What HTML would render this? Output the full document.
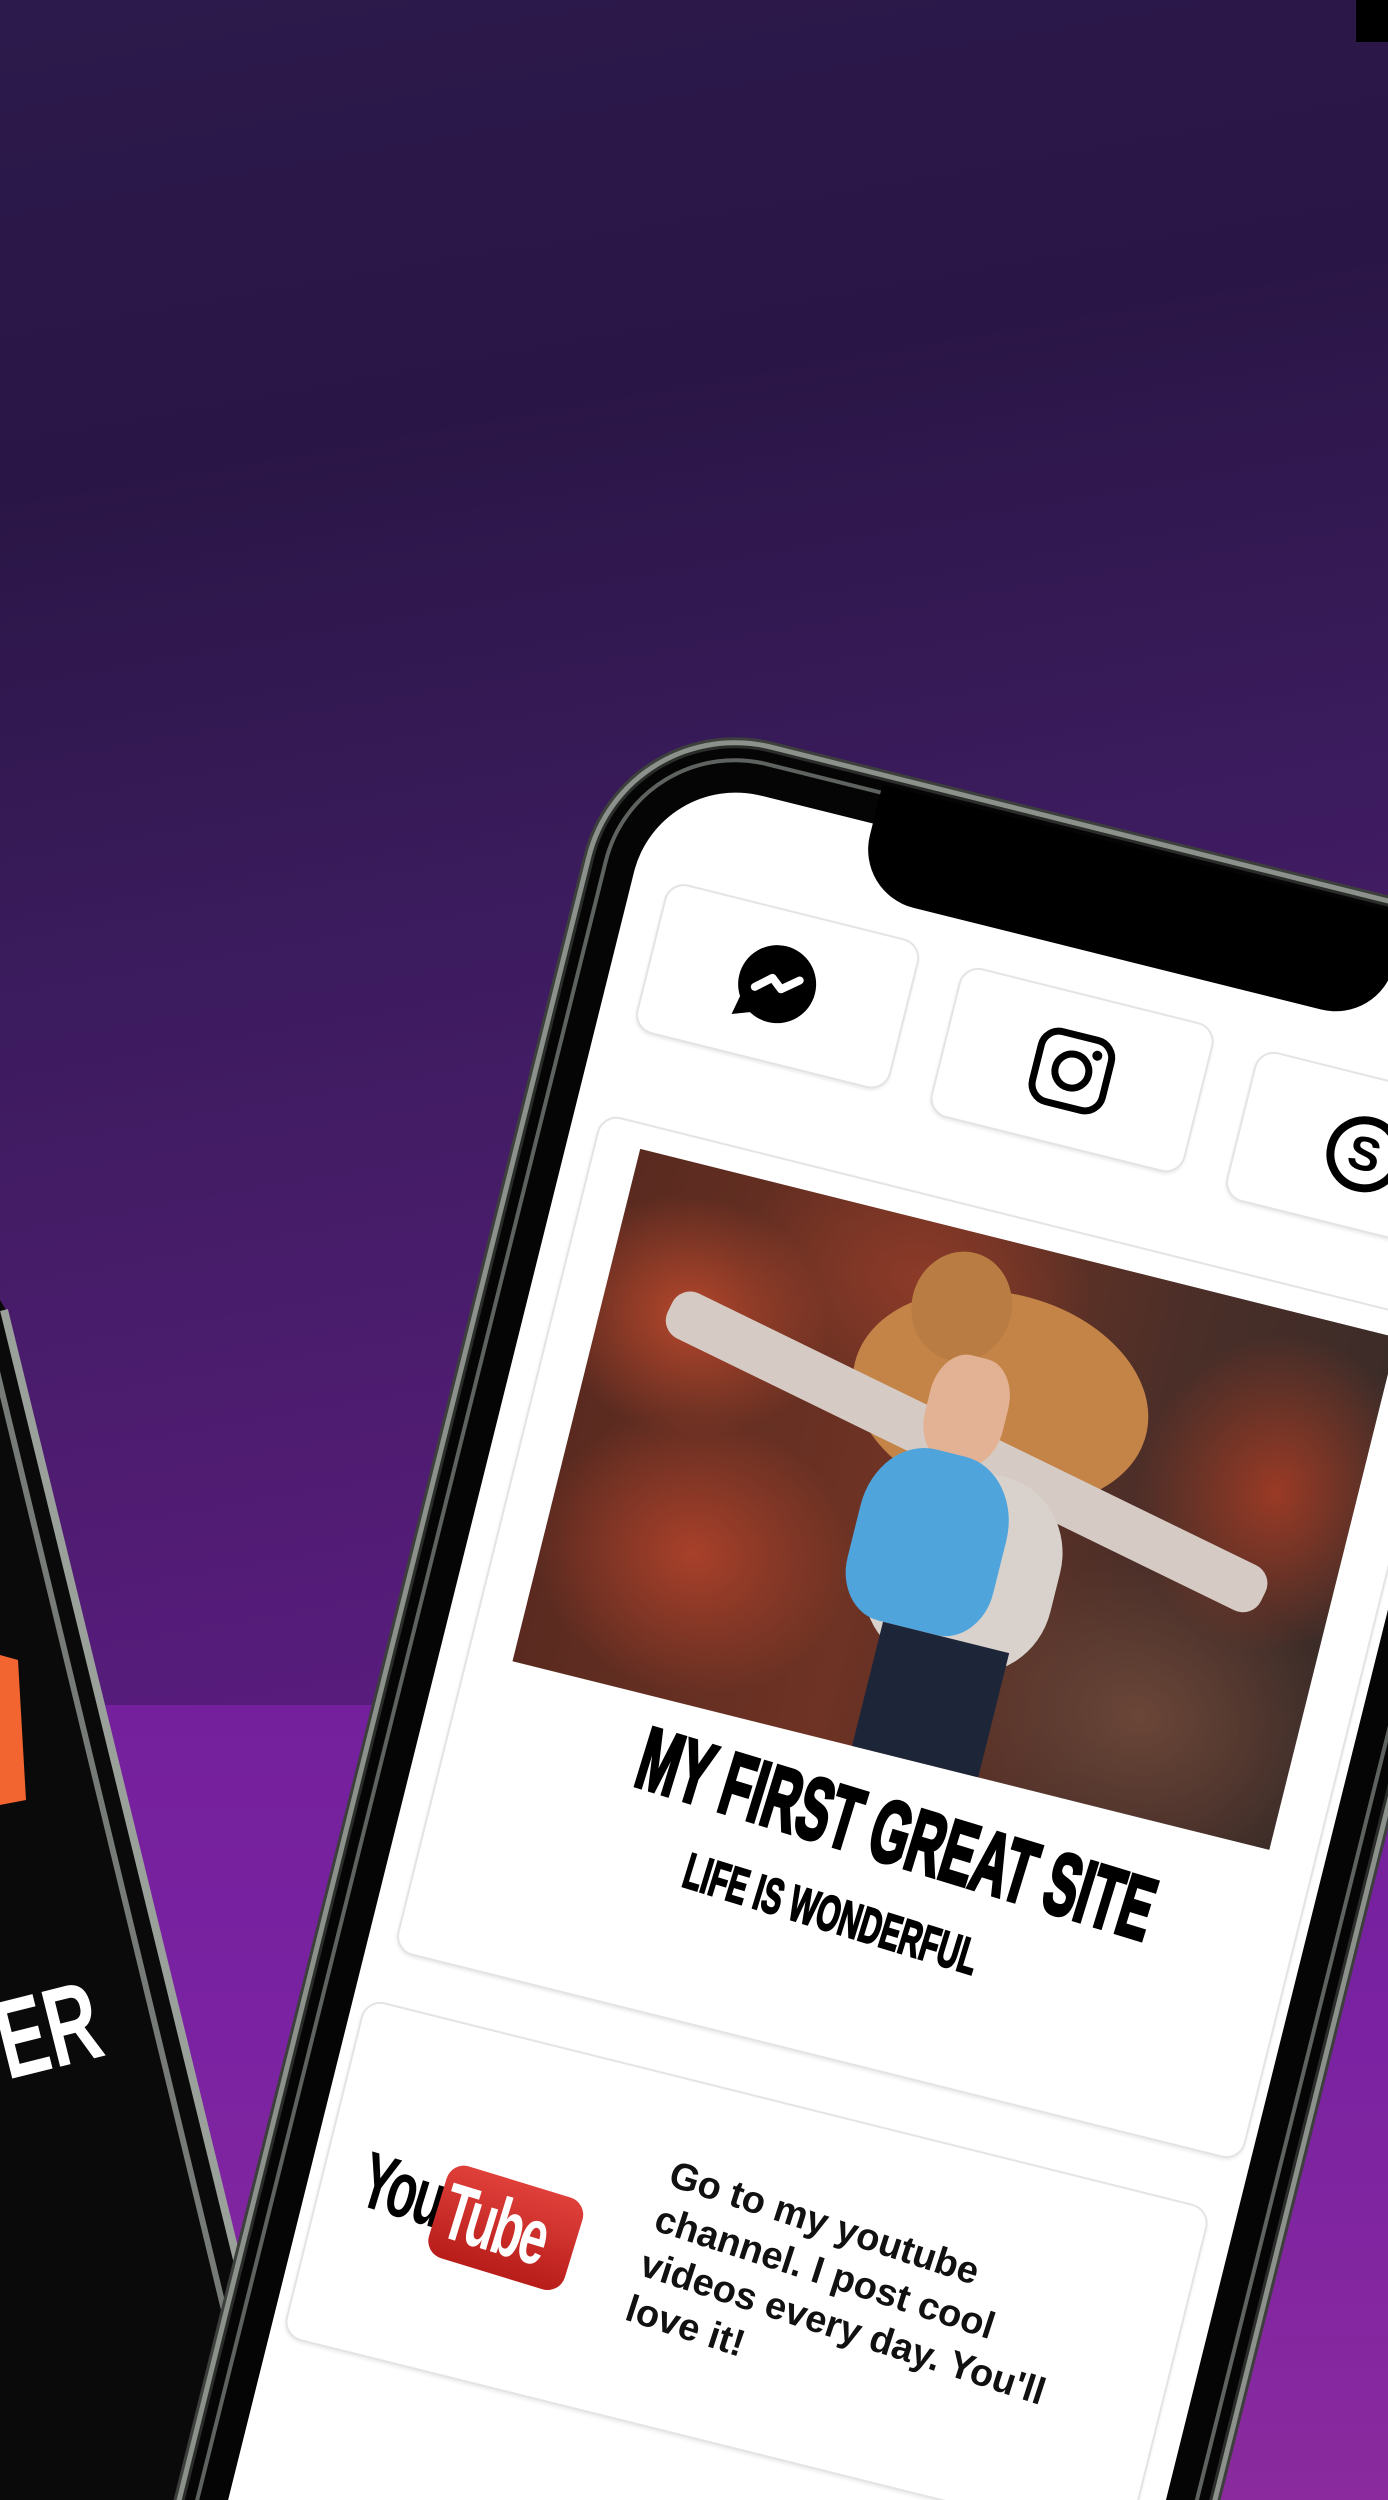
<!DOCTYPE html>
<html><head><meta charset="utf-8"><style>
html,body{margin:0;padding:0;width:1388px;height:2500px;overflow:hidden}
#root{position:relative;width:1388px;height:2500px;overflow:hidden;font-family:"Liberation Sans",sans-serif;
background:linear-gradient(170deg,#2c1a4c 0%,#2a1646 18%,#3a1b5c 35%,#4a1c6c 50%,#561c7a 62%,#5e1c84 72%,#6e1f94 85%,#7b22a0 100%);}
.floor{position:absolute;left:0;top:1705px;width:1388px;height:800px;background:linear-gradient(180deg,#74209c,#7a22a2 40%,#8a2a9e);}
.phone{position:absolute;left:606px;top:757px;transform-origin:0 0;transform:rotate(14deg);}
.frame{position:absolute;left:13px;top:-44px;width:994px;height:2090px;border-radius:145px;background:#050505;
 box-shadow:0 0 0 3px #2a2d2a,0 0 0 8px #8c918c,0 0 0 11px #3c3f3c;}
.frame:after{content:"";position:absolute;left:10px;top:10px;right:10px;bottom:10px;border-radius:135px;border:4px solid #5f635f;}
.screen{position:absolute;left:55px;top:0;width:910px;height:1990px;background:#fff;border-radius:105px;overflow:hidden;}
.content{position:absolute;left:-55px;top:0;width:1000px;height:1990px}
.notch{position:absolute;left:275px;top:-40px;width:540px;height:112px;background:#000;border-radius:0 0 60px 60px;}
.card{position:absolute;background:#fff;border:2px solid #e4e4e4;border-radius:20px;box-shadow:0 2px 3px rgba(0,0,0,.08);}
.title{position:absolute;white-space:nowrap;font-weight:bold;color:#000;transform-origin:50% 50%;-webkit-text-stroke:4px #000}
.photo{position:absolute;left:128px;top:372px;width:780px;height:528px;overflow:hidden;
background:radial-gradient(ellipse 140px 120px at 90px 150px,#b5472c,transparent),
radial-gradient(ellipse 160px 140px at 150px 380px,#a8402a,transparent),
radial-gradient(ellipse 140px 160px at 700px 180px,#9a3a25,transparent),
radial-gradient(ellipse 200px 160px at 620px 430px,#6a4638,transparent),
radial-gradient(ellipse 180px 130px at 300px 60px,#8c3a28,transparent),
linear-gradient(90deg,#5a2a20,#6e3324 40%,#4a2e28 75%,#3c2c28);}
.yt{position:absolute;left:407px;top:1336px;width:520px;font-size:38px;line-height:47px;font-weight:bold;color:#111;transform:rotate(4deg);transform-origin:0 0}
</style></head><body>
<div id="root">
<div class="floor"></div>
<div style="position:absolute;left:1356px;top:0;width:32px;height:42px;background:#000"></div>

<svg width="1388" height="2500" style="position:absolute;left:0;top:0">
 <polygon points="0,1300 6,1310 300,2500 0,2500" fill="#0a0a0a"/>
 <polyline points="4,1310 296,2500" stroke="#9aa09a" stroke-width="8" fill="none"/>
 <polyline points="-14,1326 270,2500" stroke="#777b77" stroke-width="6" fill="none"/>
 <polygon points="0,1655 18,1660 26,1800 0,1805" fill="#f26530"/>
 <text x="-10" y="2075" fill="#fff" font-family="Liberation Sans" font-weight="bold" font-size="112" transform="rotate(-14 20 2020) scale(0.66 1)">ER</text>
</svg>

<div class="phone">
 <div class="frame"></div>
 <div class="screen"><div class="content">
  <div class="card" style="left:91px;top:104px;width:258px;height:150px"></div>
  <div class="card" style="left:397px;top:114px;width:258px;height:150px"></div>
  <div class="card" style="left:704px;top:124px;width:258px;height:150px"></div>
  <svg style="position:absolute;left:178px;top:137px" width="86" height="86" viewBox="0 0 86 86">
   <circle cx="43" cy="42" r="39" fill="#000"/><path d="M10 62 L6 82 L28 74 Z" fill="#000"/>
   <polyline points="22,50 37,37 48,46 64,33" fill="none" stroke="#fff" stroke-width="8" stroke-linejoin="round" stroke-linecap="round"/>
  </svg>
  <svg style="position:absolute;left:486px;top:150px" width="84" height="84" viewBox="0 0 84 84">
   <rect x="6" y="6" width="72" height="72" rx="18" fill="none" stroke="#000" stroke-width="7"/>
   <circle cx="42" cy="42" r="17" fill="none" stroke="#000" stroke-width="7"/><circle cx="63" cy="21" r="5" fill="#000"/>
  </svg>
  <svg style="position:absolute;left:790px;top:160px" width="84" height="84" viewBox="0 0 84 84">
   <circle cx="42" cy="42" r="34" fill="none" stroke="#000" stroke-width="8"/>
   <text x="42" y="58" text-anchor="middle" font-family="Liberation Sans" font-weight="bold" font-size="48">S</text>
  </svg>
  <div class="card" style="left:82px;top:346px;width:870px;height:860px"></div>
  <div class="photo">
   <div style="position:absolute;left:260px;top:50px;width:300px;height:210px;border-radius:50%;background:#c48448"></div>
   <div style="position:absolute;left:300px;top:20px;width:100px;height:110px;border-radius:50%;background:#b97c42"></div>
   <div style="position:absolute;left:60px;top:190px;width:660px;height:50px;background:#d6cbc4;transform:rotate(12deg);border-radius:20px"></div>
   <div style="position:absolute;left:340px;top:120px;width:80px;height:110px;border-radius:40%;background:#e3b294"></div>
   <div style="position:absolute;left:320px;top:230px;width:190px;height:200px;border-radius:40%;background:#d9d2cc"></div>
   <div style="position:absolute;left:300px;top:220px;width:150px;height:180px;border-radius:40% 40% 30% 30%;background:#4fa4dc"></div>
   <div style="position:absolute;left:350px;top:400px;width:130px;height:140px;background:#1d2538"></div>
  </div>
  <div class="title" style="left:152px;top:918px;font-size:88px;transform:rotate(3deg) scaleX(0.56);width:560px;text-align:center">MY FIRST GREAT SITE</div>
  <div class="title" style="left:286px;top:1036px;font-size:50px;transform:rotate(3deg) scaleX(0.6);width:300px;text-align:center;-webkit-text-stroke:2px #000">LIFE IS WONDERFUL</div>
  <div class="card" style="left:67px;top:1262px;width:868px;height:345px"></div>
  <div style="position:absolute;left:108px;top:1395px;transform:rotate(3deg)">
   <span style="display:inline-block;font-weight:bold;font-size:80px;letter-spacing:-4px;transform:scaleX(0.62);transform-origin:0 0;vertical-align:top">You</span>
   <span style="position:absolute;left:80px;top:4px;display:inline-block;background:linear-gradient(#e0403a,#b81d1a);border-radius:18px;width:142px;height:96px;color:#fff;font-weight:bold;font-size:80px;line-height:96px;letter-spacing:-4px"><span style="display:inline-block;transform:scaleX(0.62);transform-origin:0 0;padding-left:12px">Tube</span></span>
  </div>
  <div class="yt">Go to my youtube<br>channel. I post cool<br>videos every day. You'll<br>love it!</div>
 </div></div>
 <div class="notch"></div>
</div>
</div>
</body></html>
